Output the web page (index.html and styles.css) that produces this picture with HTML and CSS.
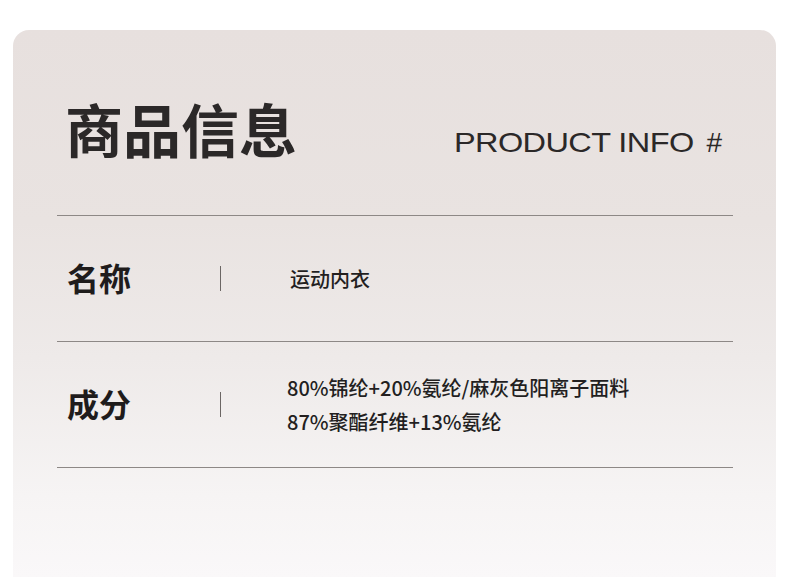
FILE: index.html
```html
<!DOCTYPE html>
<html lang="zh-CN">
<head>
<meta charset="utf-8">
<title>商品信息</title>
<link rel="stylesheet" href="styles.css">
</head>
<body>
<div class="page">
  <section class="card">
    <header class="card-head">
      <h1 class="title">商品信息</h1>
      <div class="subtitle"><span class="subtitle-text">PRODUCT INFO</span><span class="hash">#</span></div>
    </header>
    <div class="rows">
      <div class="row">
        <div class="label">名称</div>
        <div class="sep"></div>
        <div class="value value-name">运动内衣</div>
      </div>
      <div class="row">
        <div class="label">成分</div>
        <div class="sep"></div>
        <div class="value">
          <div>80%锦纶+20%氨纶/麻灰色阳离子面料</div>
          <div>87%聚酯纤维+13%氨纶</div>
        </div>
      </div>
    </div>
  </section>
</div>
</body>
</html>
```

FILE: styles.css
```css
html, body {
  margin: 0;
  padding: 0;
  background: #ffffff;
}
body {
  font-family: "Noto Sans CJK SC", "Noto Sans", sans-serif;
  color: #2a2727;
}
.page {
  width: 790px;
  height: 577px;
  padding: 30px 14px 0 13px;
  box-sizing: border-box;
  overflow: hidden;
}
.card {
  height: 547px;
  border-radius: 16px 16px 0 0;
  background: linear-gradient(180deg, #e7e0de 0%, #e9e3e1 35%, #eeeae9 60%, #f6f4f4 85%, #faf8f9 100%);
  padding: 0 43px 0 44px;
  box-sizing: border-box;
}
.card-head {
  height: 186px;
  border-bottom: 1px solid #8d8886;
  box-sizing: border-box;
  display: flex;
  justify-content: space-between;
  align-items: flex-start;
  padding: 66px 11px 0 8px;
}
.title {
  margin: 0;
  font-size: 58px;
  line-height: 64px;
  font-weight: 700;
  color: #2b2828;
}
.subtitle {
  margin-top: 31px;
  font-family: "Liberation Sans", Arial, sans-serif;
  font-size: 28px;
  line-height: 32px;
  color: #2b2828;
  display: flex;
  align-items: center;
  gap: 13px;
}
.subtitle-text {
  display: inline-block;
  letter-spacing: -0.5px;
  transform: scaleX(1.16);
  transform-origin: right center;
}
.hash {
  font-size: 28px;
}
.row {
  height: 126px;
  border-bottom: 1px solid #8d8886;
  box-sizing: border-box;
  display: flex;
  align-items: center;
}
.label {
  width: 153px;
  padding-left: 10px;
  font-size: 32px;
  font-weight: 700;
  color: #1f1c1c;
  line-height: 40px;
  padding-bottom: 3px;
}
.sep {
  width: 1px;
  height: 25px;
  background: #6b6664;
  margin-right: 66px;
}
.value {
  font-size: 20px;
  line-height: 34px;
  font-weight: 500;
  color: #231f1f;
}
.value-name {
  padding-left: 3px;
}
```
